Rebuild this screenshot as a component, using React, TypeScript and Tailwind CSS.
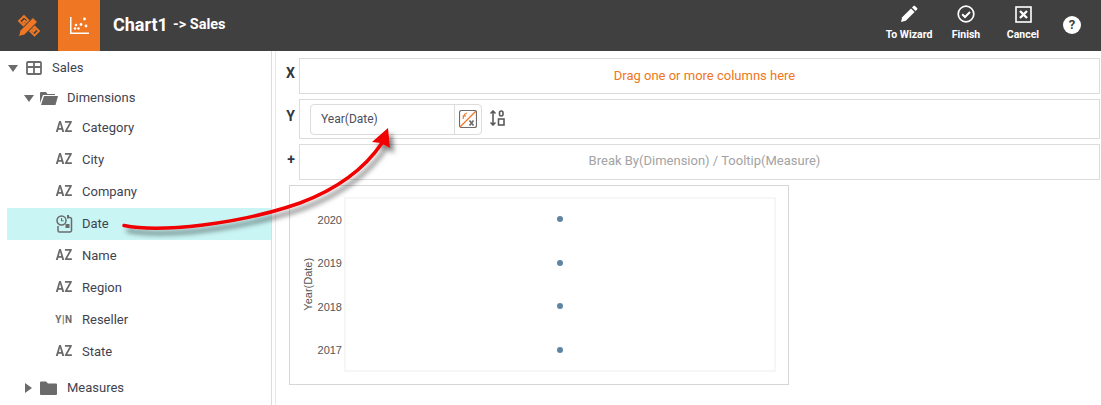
import React from 'react';

const font = "font-['Roboto',sans-serif]";

// Small icon of the field type
const TypeIcon = ({ type }: { type: string }) => {
    if (type === 'az') {
        return <span className="w-[24px] scale-x-[0.85] pb-[1px] text-center text-[15px] font-bold leading-none text-[#6b6b6b]">AZ</span>;
    }
    if (type === 'yn') {
        return <span className="w-[24px] text-center text-[10px] font-bold leading-none tracking-[0.5px] text-[#6b6b6b]">Y|N</span>;
    }
    return (
        <span className="flex w-[24px] justify-center">
            <svg width="17" height="18" viewBox="0 0 17 18" fill="none" stroke="#6b6b6b" strokeWidth="1.500">
                <path d="M2 11v4.500A1.500 1.500 0 0 0 3.500 17H14a1.500 1.500 0 0 0 1.500-1.500V4A1.500 1.500 0 0 0 14 2.500h-1" />
                <circle cx="5.500" cy="5.500" r="4.500" />
                <path d="M5.500 3v2.700h2.200" strokeWidth="1.100" />
                <rect x="9.500" y="9" width="4" height="4" fill="#6b6b6b" stroke="none" />
                <rect x="11" y="0" width="2" height="3.500" fill="#6b6b6b" stroke="none" />
            </svg>
        </span>
    );
};

const Caret = ({ open }: { open: boolean }) => (
    open
        ? <span className="h-0 w-0 border-x-[5px] border-t-[7px] border-x-transparent border-t-[#6b6b6b]" />
        : <span className="h-0 w-0 border-y-[5px] border-l-[7px] border-y-transparent border-l-[#6b6b6b]" />
);

const Field = ({ name, type, active }: { name: string; type: string; active?: boolean }) => (
    <div className={`flex h-8 items-center gap-[6px] pl-[45px] text-[13px] text-[#3f4350] ${active ? 'bg-[#c9f5f4]' : ''}`}>
        <TypeIcon type={type} />
        <span>{name}</span>
    </div>
);

const ToolButton = ({ label, children }: { label: string; children: React.ReactNode }) => (
    <div className="flex w-[46px] flex-col items-center gap-[4px] whitespace-nowrap text-[10.5px] font-bold text-white">
        <span className="flex h-[18px] items-center">{children}</span>
        <span>{label}</span>
    </div>
);

const Slot = ({ label, className, children }: { label: string; className: string; children: React.ReactNode }) => (
    <div className={`flex items-stretch ${className}`}>
        <span className="flex w-[23px] items-center justify-end pb-[5px] pr-[4px] text-[14px] font-bold text-[#33363f]">{label}</span>
        <div className="flex flex-1 items-center border border-[#dcdcdc]">{children}</div>
    </div>
);

const fields = [
    ['Category', 'az'],
    ['City', 'az'],
    ['Company', 'az'],
    ['Date', 'date'],
    ['Name', 'az'],
    ['Region', 'az'],
    ['Reseller', 'yn'],
    ['State', 'az'],
];

const years = ['2020', '2019', '2018', '2017'];

const App: React.FC = () => {
    return (
        <div className={`relative h-[405px] w-[1101px] overflow-hidden bg-white ${font}`}>
            <header className="flex h-[51px] items-center bg-[#404040] text-white">
                <div className="flex h-full w-[58px] items-center justify-center">
                    <svg width="24" height="24" viewBox="0 0 24 24" fill="none" stroke="#ef7622">
                        <path d="M2 7l5-5 4.500 4.500-2 2-2-2-1.500 1.500 2 2-1.500 1.500z" strokeWidth="1.900" />
                        <path d="M13 17l4.500 4.500 4.500-4.500-4.500-4.500-1.500 1.500 2 2-1.500 1.500-2-2z" strokeWidth="1.900" />
                        <path d="M1.500 22.500l1.500-6L16 3.500l4.500 4.500-13 13z" fill="#ef7622" stroke="#404040" strokeWidth="1" />
                    </svg>
                </div>
                <div className="flex h-full w-[42px] items-center justify-center bg-[#ef7622]">
                    <svg width="19" height="17" viewBox="0 0 19 17" fill="#fff">
                        <path d="M0 0h1.500v15.500H19V17H0z" />
                        <circle cx="6" cy="8" r="1.300" /><circle cx="11" cy="7.500" r="1.400" /><circle cx="14.500" cy="2" r="1.400" />
                        <circle cx="16" cy="9" r="1.400" /><circle cx="8.500" cy="11.500" r="1.300" /><circle cx="5" cy="11.500" r="1.300" />
                    </svg>
                </div>
                <div className="ml-[13px] flex flex-1 items-center gap-[5px] pb-[2px] font-bold">
                    <span className="text-[18px]">Chart1</span>
                    <span className="text-[14.5px]">-&gt; Sales</span>
                </div>
                <div className="flex gap-[11px] self-start pt-[5px]">
                    <ToolButton label="To Wizard">
                        <svg width="18" height="18" viewBox="0 0 18 18" fill="#fff">
                            <path d="M1 17l1.200-4.800L11 3.400 14.600 7l-8.800 8.800z" />
                            <path d="M12 2.400l1.500-1.500a1 1 0 0 1 1.400 0l2.200 2.200a1 1 0 0 1 0 1.400L15.600 6z" />
                        </svg>
                    </ToolButton>
                    <ToolButton label="Finish">
                        <svg width="18" height="18" viewBox="0 0 18 18" fill="none" stroke="#fff">
                            <circle cx="9" cy="9" r="7.800" strokeWidth="1.700" />
                            <path d="M5.200 9.200L8 12l5-5" strokeWidth="2" />
                        </svg>
                    </ToolButton>
                    <ToolButton label="Cancel">
                        <svg width="17" height="17" viewBox="0 0 17 17" fill="none" stroke="#fff">
                            <rect x="1" y="1" width="15" height="15" strokeWidth="1.600" />
                            <path d="M5 5l7 7M12 5l-7 7" strokeWidth="2.400" />
                        </svg>
                    </ToolButton>
                </div>
                <div className="mb-[1px] ml-[17px] mr-[20px] flex h-[18px] w-[18px] items-center justify-center rounded-full bg-white text-[13px] font-bold text-[#404040]">?</div>
            </header>

            <div className="flex h-[354px]">
                <aside className="w-[272px] border-r border-[#dcdcdc] pl-[7px] pt-[1px] text-[13px] text-[#3f4350]">
                    <div className="flex h-[32px] items-center pl-[1px]">
                        <Caret open />
                        <svg className="ml-[8px]" width="16" height="14" viewBox="0 0 16 14" fill="none" stroke="#6b6b6b" strokeWidth="1.800">
                            <rect x="1" y="1" width="14" height="12" rx="1" />
                            <path d="M1 6h14M8 1v12" />
                        </svg>
                        <span className="ml-[10px]">Sales</span>
                    </div>
                    <div className="flex h-[28px] items-center pl-[17px]">
                        <Caret open />
                        <svg className="ml-[6px]" width="18" height="14" viewBox="0 0 18 14" fill="#6b6b6b">
                            <path d="M0 2a1 1 0 0 1 1-1h5l1.500 2H15v1H3L0 12z" />
                            <path d="M4 5h14l-2.500 9H1z" />
                        </svg>
                        <span className="ml-[9px]">Dimensions</span>
                    </div>
                    {fields.map(([name, type]) => (
                        <Field key={name} name={name} type={type} active={name === 'Date'} />
                    ))}
                    <div className="mt-[4px] flex h-[32px] items-center pl-[18px]">
                        <Caret open={false} />
                        <svg className="ml-[8px]" width="17" height="14" viewBox="0 0 17 14" fill="#6b6b6b">
                            <path d="M0 1.500A1 1 0 0 1 1 .5h5L8 2.500h8a1 1 0 0 1 1 1V13a1 1 0 0 1-1 1H1a1 1 0 0 1-1-1z" />
                        </svg>
                        <span className="ml-[10px]">Measures</span>
                    </div>
                </aside>

                <main className="ml-[3px] flex-1 border-l border-[#e8e8e8] pr-[1px] pt-[7px]">
                    <Slot label="X" className="h-[36px]">
                        <span className="w-full pb-[1px] pl-[10px] text-center text-[13px] text-[#ef7622]">Drag one or more columns here</span>
                    </Slot>
                    <Slot label="Y" className="mt-[5px] h-[40px]">
                        <div className="ml-[10px] flex h-[31px] w-[172px] items-center rounded-[4px] border border-[#dcdcdc] text-[12px] text-[#4a5060]">
                            <span className="flex-1 pl-[10px]">Year(Date)</span>
                            <span className="flex h-full w-[27px] items-center justify-center border-l border-[#dcdcdc]">
                                <svg width="18" height="18" viewBox="0 0 18 18" fill="none" stroke="#6b6b6b">
                                    <rect x="0.500" y="0.500" width="17" height="17" rx="2" strokeWidth="1.200" />
                                    <path d="M1 17L17 1" stroke="#ef7622" strokeWidth="1.200" />
                                    <path d="M4 9c1-5 2-6 4-6M3.500 6H7" strokeWidth="1.200" stroke="#ef7622" />
                                    <path d="M10.500 10.500l4 5M14.500 10.500l-4 5" strokeWidth="1.700" />
                                </svg>
                            </span>
                        </div>
                        <svg className="mb-[3px] ml-[7px]" width="16" height="16" viewBox="0 0 16 16" fill="none" stroke="#5a5a5a" strokeWidth="1.600">
                            <path d="M4 1v14M1.500 3.500L4 1l2.500 2.500M1.500 12.500L4 15l2.500-2.500" />
                            <rect x="10.500" y="1" width="3.500" height="5" rx="1.700" />
                            <rect x="9.500" y="9" width="5.500" height="6" />
                        </svg>
                    </Slot>
                    <Slot label="+" className="mt-[5px] h-[36px]">
                        <span className="w-full pb-[2px] pl-[10px] text-center text-[13px] text-[#a3a3a3]">Break By(Dimension) / Tooltip(Measure)</span>
                    </Slot>

                    <div className="ml-[13px] mt-[5px] flex h-[200px] w-[500px] border border-[#d6d6d6] pb-[12px] pl-[12px] pr-[12px] pt-[11px] font-['Liberation_Sans',sans-serif] text-[11px] text-[#555]">
                        <div className="flex w-[12px] items-center justify-center">
                            <span className="-rotate-90 whitespace-nowrap">Year(Date)</span>
                        </div>
                        <div className="flex w-[30px] flex-col justify-around pr-[2px] pt-[1px] text-right">
                            {years.map((year) => <span key={year}>{year}</span>)}
                        </div>
                        <div className="flex flex-1 flex-col justify-around pl-[213px] shadow-[inset_0_0_0_2px_#f6f6f4]">
                            {years.map((year) => <span key={year} className="h-[6px] w-[6px] rounded-full bg-[#5f84a2]" />)}
                        </div>
                    </div>
                </main>
            </div>

            {/* Annotation drawn over the screenshot */}
            <svg className="pointer-events-none absolute left-0 top-0" width="1101" height="405" viewBox="0 0 1101 405" fill="none">
                <defs>
                    <filter id="arrowShadow" x="-10%" y="-20%" width="125%" height="150%">
                        <feDropShadow dx="4" dy="5" stdDeviation="2.500" floodColor="#000" floodOpacity="0.500" />
                    </filter>
                </defs>
                <g filter="url(#arrowShadow)">
                    <path d="M124 225.500C160 233 240 224 300 203C340 188 365 168 382 143" stroke="#f00000" strokeWidth="3.500" strokeLinecap="round" />
                    <path d="M388 128L372 142L381 143L390 148Z" fill="#f00000" />
                </g>
            </svg>
        </div>
    );
};

export default App;
